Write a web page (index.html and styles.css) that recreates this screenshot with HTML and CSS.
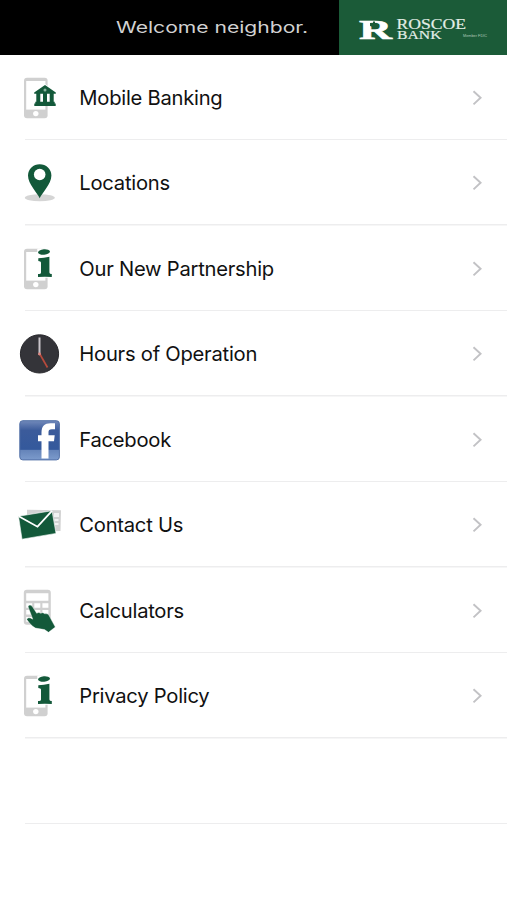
FILE: index.html
```html
<!DOCTYPE html>
<html lang="en">
<head>
<meta charset="utf-8">
<title>Roscoe Bank</title>
<link rel="stylesheet" href="styles.css">
</head>
<body>
<svg class="defs" aria-hidden="true">
  <defs>
    <symbol id="phone" viewBox="0 0 60 60">
      <rect x="14" y="9.8" width="23.6" height="40.4" rx="3" fill="#d0d0d0"/>
      <rect x="16.2" y="13" width="19.2" height="28.6" fill="#fff"/>
      <circle cx="25.8" cy="45.6" r="2.7" fill="#fff"/>
    </symbol>
    <symbol id="info" viewBox="0 0 60 60">
      <use href="#phone"/>
      <path d="M27.8 10h12v7.5l-.5 17 2.7.5v3.2H28z" fill="#fff" stroke="#fff" stroke-width="1"/>
      <ellipse cx="34" cy="13" rx="6" ry="2.8" transform="rotate(-5 34 13)" fill="#13593a"/>
      <path d="M28.3 19.3Q34 18.8 39.4 17.7V33.5Q39.4 35 41.8 35V38Q35 37.4 28 38V35Q31 35 31 33.5V23.5Q31 22 28.3 22Z" fill="#13593a"/>
    </symbol>
    <symbol id="chevron" viewBox="0 0 12 18">
      <path d="M1.5 2.2 8.6 8.7 1.5 15.4" fill="none" stroke="#c2c2c5" stroke-width="1.9"/>
    </symbol>
  </defs>
</svg>
<header class="banner">
  <div class="welcome">
    <svg class="fill" viewBox="0 0 339 54"><text class="greeting" transform="translate(116 33) scale(1.25 1)" textLength="153.6" lengthAdjust="spacingAndGlyphs">Welcome neighbor.</text></svg>
  </div>
  <div class="brand">
    <svg class="fill" viewBox="0 0 168 54">
      <text class="monogram" x="20" y="38.5" textLength="33" lengthAdjust="spacingAndGlyphs">R</text>
      <path d="M31 23h3v-1.5h2V24h4l-1 3-3 2-2-2-3-1z" fill="#1b5b38"/>
      <text class="wordmark" x="57.5" y="28.6" textLength="69.5" lengthAdjust="spacingAndGlyphs">ROSCOE</text>
      <text class="wordmark bank" x="58" y="39" textLength="44.5" lengthAdjust="spacingAndGlyphs">BANK</text>
      <text class="member" x="124" y="37.3" textLength="24" lengthAdjust="spacingAndGlyphs">Member FDIC</text>
    </svg>
  </div>
</header>
<main class="menu">
  <div class="row">
    <svg class="icon" viewBox="0 0 60 60"><use href="#phone"/>
      <path d="M23.5 24 35 16l11.5 8v14h-23z" fill="#fff"/>
      <path d="M24.2 24.5 35 17l10.8 7.5v1.2H24.2zM26.3 25.7h4v8.8h-4zM33 25.7h4v8.8h-4zM39.7 25.7h4v8.8h-4zM25.3 33.7h19.4v1.8h1V38H24.3v-2.5h1z" fill="#13593a"/><circle cx="35" cy="22" r="1.5" fill="#8cb49f"/></svg>
    <span class="label">Mobile Banking</span><svg class="arrow"><use href="#chevron"/></svg>
  </div>
  <div class="row">
    <svg class="icon" viewBox="0 0 60 60"><ellipse cx="29.8" cy="44.8" rx="15" ry="3.5" fill="#d5d5d5"/><path d="M29.7 45.2C27.5 40 18 31 18 22.5a11.7 11.3 0 0 1 23.4 0C41.4 31 32 40 29.7 45.2Z" fill="#13593a"/><circle cx="29.7" cy="21.5" r="5.8" fill="#fff"/></svg>
    <span class="label">Locations</span><svg class="arrow"><use href="#chevron"/></svg>
  </div>
  <div class="row">
    <svg class="icon"><use href="#info"/></svg>
    <span class="label">Our New Partnership</span><svg class="arrow"><use href="#chevron"/></svg>
  </div>
  <div class="row">
    <svg class="icon" viewBox="0 0 60 60"><circle cx="29.5" cy="29.9" r="19.1" fill="#343439" stroke="#29292d"/><path d="M29.5 13.5V31" stroke="#c9c4ca" stroke-width="2"/><path d="m29.5 29.5 8 14" stroke="#b64a3c" stroke-width="1.7"/><circle cx="29.5" cy="30" r="1.4" fill="#dc8580"/></svg>
    <span class="label">Hours of Operation</span><svg class="arrow"><use href="#chevron"/></svg>
  </div>
  <div class="row">
    <svg class="icon" viewBox="0 0 60 60">
      <linearGradient id="blue" x2="0" y2="1">
        <stop offset="0" stop-color="#7189ba"/><stop offset=".25" stop-color="#3b5b9b"/><stop offset=".73" stop-color="#34599c"/><stop offset=".76" stop-color="#6685ba"/><stop offset="1" stop-color="#7c9bcc"/>
      </linearGradient>
      <rect x="9.8" y="10.7" width="39.6" height="39.2" rx="3" fill="url(#blue)" stroke="#5371a7"/><path d="M31.5 48.5V31.2H28v-6h3.5v-3c0-6 3-9 9-9H45v6h-3.2c-2.5 0-3.3 1-3.3 3v3h6.2l-.7 6h-5.5v17.3z" fill="#fff"/></svg>
    <span class="label">Facebook</span><svg class="arrow"><use href="#chevron"/></svg>
  </div>
  <div class="row">
    <svg class="icon" viewBox="0 0 60 60"><path d="M17 14.8 51 15.2 50.5 36 17 37z" fill="#d2d2d2"/><path d="M44 18h5v4h-5zM44.5 24h4v2h-4zM44.5 28h4v2h-4z" fill="#f2f2f2"/><path d="M8.5 21.3 42 15.7 46 38.4 12 44.2z" fill="#13593a" stroke="#fff" stroke-width=".6"/><path d="M8.7 21.3 27.5 31.7 42 15.9" fill="none" stroke="#fff" stroke-width="1.8"/></svg>
    <span class="label">Contact Us</span><svg class="arrow"><use href="#chevron"/></svg>
  </div>
  <div class="row">
    <svg class="icon" viewBox="0 0 60 60"><rect x="13.8" y="8.8" width="27" height="35" rx="3" fill="#d0d0d0"/><path d="M16.2 12.2h22.2v7.6H16.2zM16.2 22.2h6v4.5h-6zM24.3 22.2h6v4.5h-6zM32.4 22.2h6v4.5h-6zM16.2 29h6v4.5h-6zM24.3 29h6v4.5h-6zM32.4 29h6v4.5h-6zM16.2 36h6v4.8h-6z" fill="#fff"/><path d="M18 25.5Q19.5 22.6 22 25l4.7 7.3q2-1.8 4 0 2-1.4 4 .4 3-.8 4.5 2l2.8 5.3 3.3 6.1-6.8 5.2-4-2.7-9-1.5q-3-1.3-6-5l-2.7-3.5q.5-2.6 3.5-1.7l2.5 1.3z" fill="#13593a" stroke="#fff" stroke-width=".4"/></svg>
    <span class="label">Calculators</span><svg class="arrow"><use href="#chevron"/></svg>
  </div>
  <div class="row">
    <svg class="icon"><use href="#info"/></svg>
    <span class="label">Privacy Policy</span><svg class="arrow"><use href="#chevron"/></svg>
  </div>
  <div class="row"></div>
</main>
</body>
</html>
```

FILE: styles.css
```css
* { box-sizing: border-box; }
body {
  margin: 0;
  background: #fff;
  color: #111;
  font-family: Inter, "Liberation Sans", sans-serif;
}
.defs { display: none; }
.banner {
  display: flex;
  height: 54.5px;
  background: #000;
}
.welcome { flex: 0 0 339px; }
.brand { flex: 1; background: #1b5b38; }
.fill { display: block; width: 100%; height: 54px; }
.greeting { font: 400 16px Inter, sans-serif; fill: #d2d2d2; }
.monogram { font: 700 28px "Liberation Serif", serif; fill: #fff; stroke: #fff; stroke-width: .6px; }
.wordmark { font: 400 15.5px "Liberation Serif", serif; fill: #e4eee7; stroke: #e4eee7; stroke-width: .2px; }
.bank { font-size: 13.5px; }
.member { font: 400 4px "Liberation Sans", sans-serif; fill: #b0cab8; }
.menu { padding-top: .4px; }
.row {
  display: flex;
  align-items: center;
  height: 85.5px;
  padding: 0 23px 0 10px;
  background: linear-gradient(#ededee, #ededee) 25px 100% / 100% 1.5px no-repeat;
}
.icon { flex: none; width: 60px; height: 60px; }
.label {
  flex: 1;
  margin-left: 9.3px;
  font-size: 20.2px;
  letter-spacing: -0.25px;
  line-height: 28px;
  white-space: nowrap;
}
.arrow { flex: none; width: 12px; height: 18px; }
```
